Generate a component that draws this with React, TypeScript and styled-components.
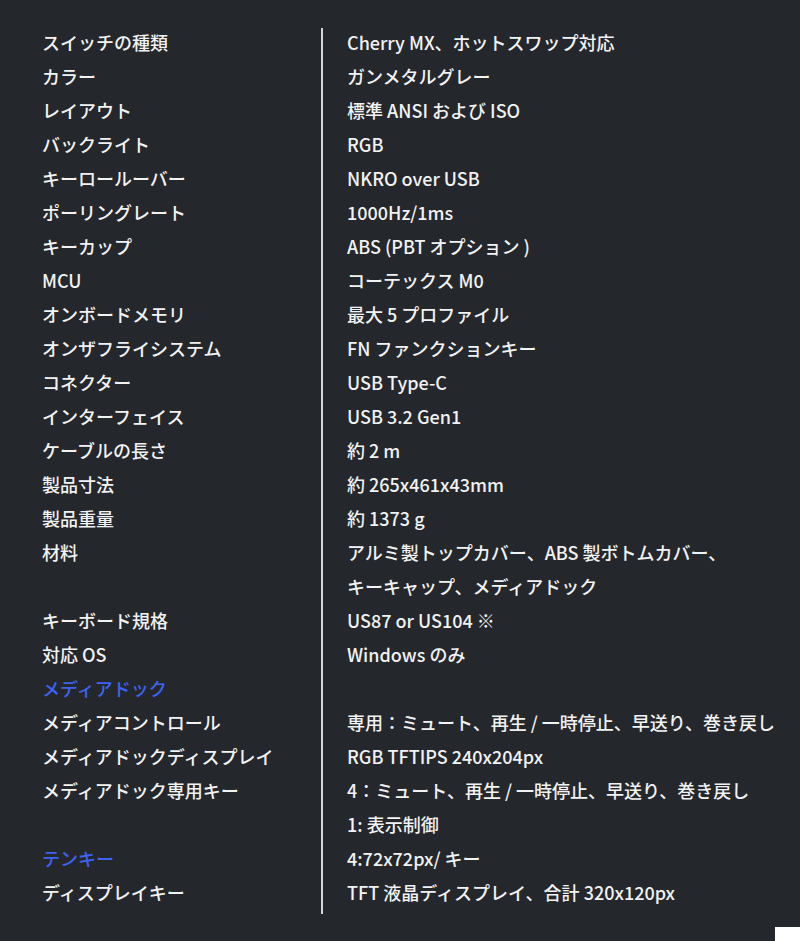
import styled, { createGlobalStyle } from 'styled-components'

const GlobalStyle = createGlobalStyle`
  html, body {
    margin: 0;
    padding: 0;
    background: #24272b;
  }
`

const Page = styled.div`
  background-color: #24272b;
  min-height: 941px;
  box-sizing: border-box;
  padding-top: 28px;
  display: flex;
  flex-direction: column;
  font-family: 'Noto Sans CJK JP', 'Noto Sans', sans-serif;
  font-size: 18px;
  font-weight: 500;
  color: #f2f2f2;
`

const SpecTable = styled.div`
  display: grid;
  grid-template-columns: 321px 1fr;
`

const Labels = styled.div`
  display: flex;
  flex-direction: column;
  padding-left: 42px;
`

const Values = styled.div`
  display: flex;
  flex-direction: column;
  border-left: 2px solid #d6d6d6;
  padding-left: 24px;
  padding-bottom: 2px;
`

const Cell = styled.div<{ $accent?: boolean }>`
  height: 34px;
  line-height: 28px;
  white-space: nowrap;
  color: ${(p) => (p.$accent ? '#3d63f2' : '#f2f2f2')};
`

const Footer = styled.div`
  display: flex;
  justify-content: flex-end;
  margin-top: auto;
`

const TopButton = styled.div`
  width: 25px;
  height: 14px;
  background: #ffffff;
`

type Row = { label?: string; value?: string; accent?: boolean }

const rows: Row[] = [
  { label: 'スイッチの種類', value: 'Cherry MX、ホットスワップ対応' },
  { label: 'カラー', value: 'ガンメタルグレー' },
  { label: 'レイアウト', value: '標準 ANSI および ISO' },
  { label: 'バックライト', value: 'RGB' },
  { label: 'キーロールーバー', value: 'NKRO over USB' },
  { label: 'ポーリングレート', value: '1000Hz/1ms' },
  { label: 'キーカップ', value: 'ABS (PBT オプション )' },
  { label: 'MCU', value: 'コーテックス M0' },
  { label: 'オンボードメモリ', value: '最大 5 プロファイル' },
  { label: 'オンザフライシステム', value: 'FN ファンクションキー' },
  { label: 'コネクター', value: 'USB Type-C' },
  { label: 'インターフェイス', value: 'USB 3.2 Gen1' },
  { label: 'ケーブルの長さ', value: '約 2 m' },
  { label: '製品寸法', value: '約 265x461x43mm' },
  { label: '製品重量', value: '約 1373 g' },
  { label: '材料', value: 'アルミ製トップカバー、ABS 製ボトムカバー、' },
  { value: 'キーキャップ、メディアドック' },
  { label: 'キーボード規格', value: 'US87 or US104 ※' },
  { label: '対応 OS', value: 'Windows のみ' },
  { label: 'メディアドック', accent: true },
  { label: 'メディアコントロール', value: '専用：ミュート、再生 / 一時停止、早送り、巻き戻し' },
  { label: 'メディアドックディスプレイ', value: 'RGB TFTIPS 240x204px' },
  { label: 'メディアドック専用キー', value: '4：ミュート、再生 / 一時停止、早送り、巻き戻し' },
  { value: '1: 表示制御' },
  { label: 'テンキー', value: '4:72x72px/ キー', accent: true },
  { label: 'ディスプレイキー', value: 'TFT 液晶ディスプレイ、合計 320x120px' },
]

const App = () => {
  return (
    <>
      <GlobalStyle />
      <Page>
        <SpecTable>
          <Labels>
            {rows.map((r, i) => (
              <Cell key={i} $accent={r.accent}>
                {r.label}
              </Cell>
            ))}
          </Labels>
          <Values>
            {rows.map((r, i) => (
              <Cell key={i}>{r.value}</Cell>
            ))}
          </Values>
        </SpecTable>
        <Footer>
          <TopButton />
        </Footer>
      </Page>
    </>
  )
}

export default App
